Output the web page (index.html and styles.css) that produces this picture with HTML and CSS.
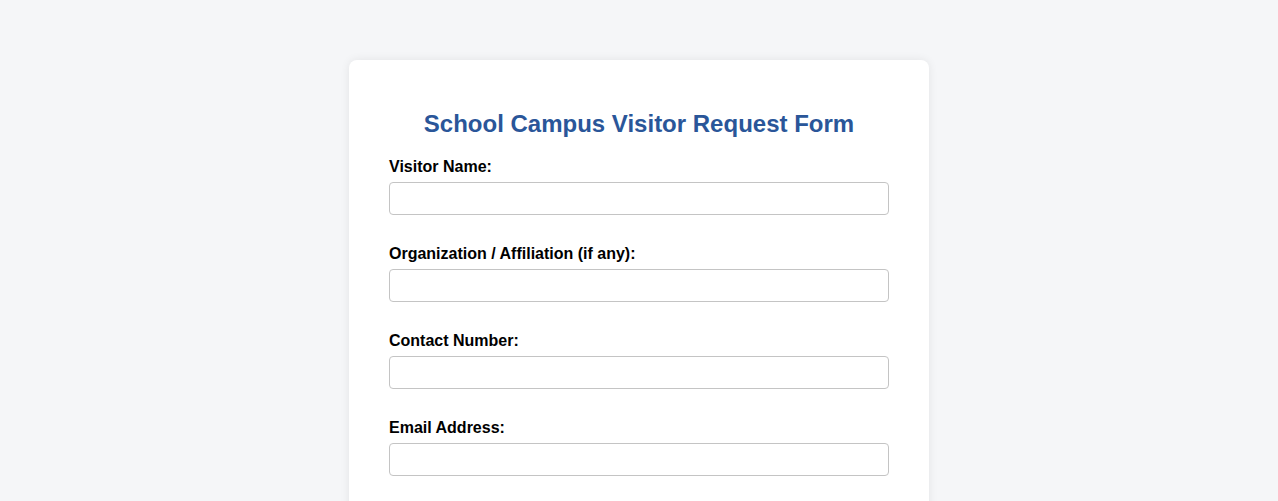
FILE: index.html
```html
<!DOCTYPE html>
<html lang="en">
<head>
<meta charset="utf-8">
<title>School Campus Visitor Request Form</title>
<link rel="stylesheet" href="styles.css">
</head>
<body>
<div class="card">
  <h2 class="title">School Campus Visitor Request Form</h2>
  <form class="form">
    <div class="group">
      <label class="label" for="name">Visitor Name:</label>
      <input class="input" id="name" type="text">
    </div>
    <div class="group">
      <label class="label" for="org">Organization / Affiliation (if any):</label>
      <input class="input" id="org" type="text">
    </div>
    <div class="group">
      <label class="label" for="phone">Contact Number:</label>
      <input class="input" id="phone" type="tel">
    </div>
    <div class="group">
      <label class="label" for="email">Email Address:</label>
      <input class="input" id="email" type="email">
    </div>
  </form>
</div>
</body>
</html>
```
FILE: styles.css
```css
html, body {
  margin: 0;
  padding: 0;
}
body {
  background: #f5f6f8;
  font-family: "Liberation Sans", Arial, sans-serif;
  color: #000;
  padding: 60px 20px;
}
.card {
  width: 580px;
  box-sizing: border-box;
  margin: 0 auto;
  background: #fff;
  border-radius: 8px;
  box-shadow: 0 0 10px rgba(0, 0, 0, 0.08);
  padding: 50px 40px 40px;
}
.title {
  margin: 0 0 20px;
  text-align: center;
  color: #2a5699;
  font-size: 24px;
  font-weight: bold;
}
.group {
  margin-bottom: 30px;
}
.label {
  display: block;
  font-weight: bold;
  font-size: 16px;
  line-height: 18px;
  margin-bottom: 6px;
}
.input {
  display: block;
  width: 100%;
  height: 33px;
  box-sizing: border-box;
  border: 1px solid #c4c4c4;
  border-radius: 4px;
  padding: 6px 10px;
  font-family: inherit;
  font-size: 15px;
  background: #fff;
}
```
